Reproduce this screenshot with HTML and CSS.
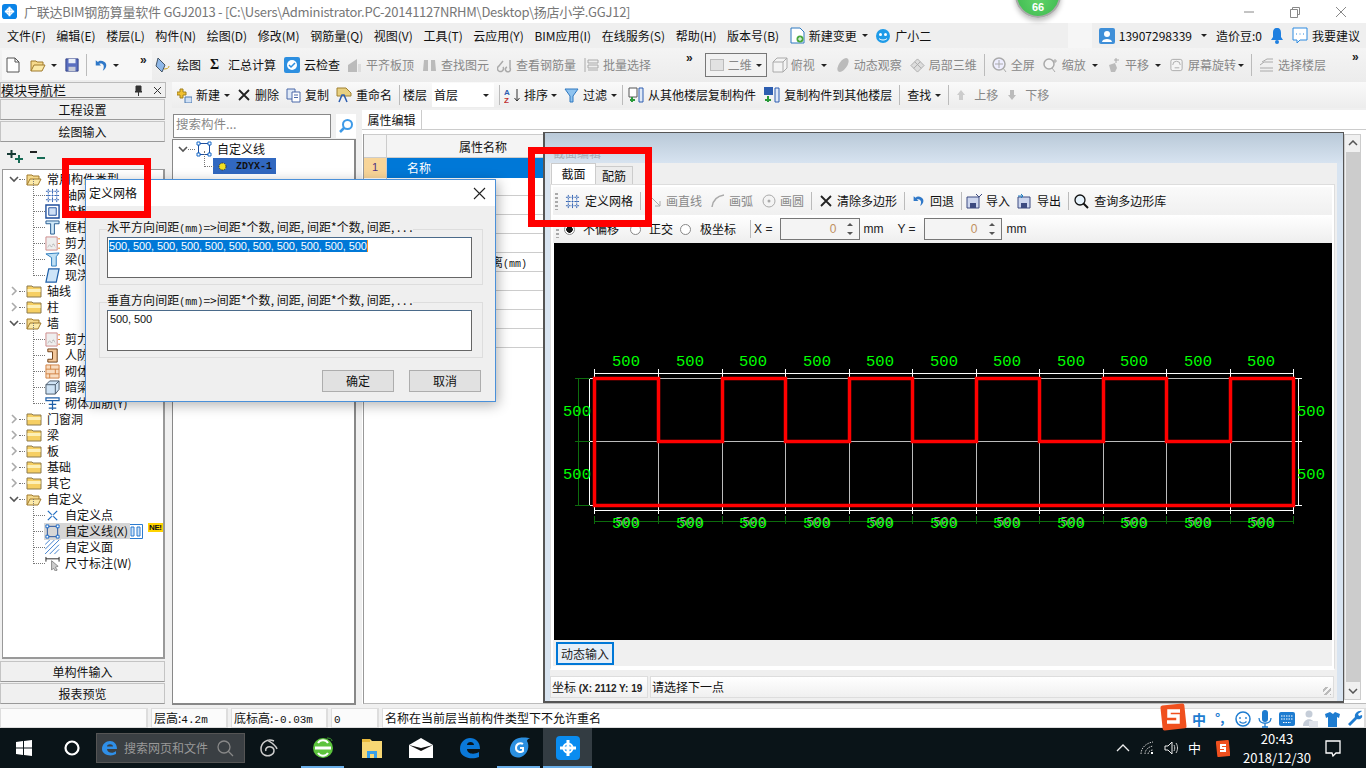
FILE: index.html
```html
<!DOCTYPE html>
<html lang="zh-CN">
<head>
<meta charset="utf-8">
<title>广联达BIM钢筋算量软件 GGJ2013</title>
<link rel="stylesheet" href="styles.css">
</head>
<body>
<svg class="defs" width="0" height="0">
  <defs>
    <symbol id="open" viewBox="0 0 16 16"><path d="M1 14V4h5l1 1h6v3" fill="#f5d98c" stroke="#a07a2c"/><path d="M1 14l3-6h11l-3 6z" fill="#fbe9a8" stroke="#a07a2c"/></symbol>
    <symbol id="closed" viewBox="0 0 16 16"><path d="M1 14V3h5l1 1h8v10z" fill="#f6cf63" stroke="#8d7b4d"/><path d="M1.500 6h13v3h-13z" fill="#fdf0b8"/></symbol>
    <symbol id="chev-d" viewBox="0 0 10 10"><path d="M1 3l4 4 4-4" fill="none" stroke="#555" stroke-width="1.600"/></symbol>
    <symbol id="chev-r" viewBox="0 0 10 10"><path d="M3 1l4 4-4 4" fill="none" stroke="#aaa" stroke-width="1.600"/></symbol>
    <symbol id="square" viewBox="0 0 16 16"><path d="M2.500 2.500h11v11h-11z" fill="none" stroke="#1f4e9c"/><path d="M1 1h3v3H1zM12 1h3v3h-3zM1 12h3v3H1zM12 12h3v3h-3z" fill="#fff" stroke="#1668c8"/></symbol>
    <symbol id="grid" viewBox="0 0 16 16"><path d="M1 3.500h14M1 8h14M1 12.500h14M3.500 1v14M8 1v14M12.500 1v14" fill="none" stroke="#2a5db0" stroke-dasharray="2 1"/></symbol>
    <symbol id="frame" viewBox="0 0 16 16"><path d="M1 1h14v14H1z" fill="#fff" stroke="#1f4e9c" stroke-width="1.500"/><path d="M4 4h8v8H4z" fill="#cfe0f5" stroke="#1f4e9c"/></symbol>
    <symbol id="column" viewBox="0 0 16 16"><path d="M1 1h14v3H10v11H6V4H1z" fill="#cfe8f7" stroke="#22598f"/></symbol>
    <symbol id="wall" viewBox="0 0 16 16"><path d="M1 1h12v14H1z" fill="#eee" stroke="#c88"/><path d="M3 12l2-3 2 3 2-4 2 4" fill="none" stroke="#999" stroke-dasharray="1 1"/><path d="M14 3h2M14 8h2M14 13h2" stroke="#e08020"/></symbol>
    <symbol id="beam" viewBox="0 0 16 16"><path d="M1 2l14-1-3 4v10H7V6z" fill="#bfe0f5" stroke="#2b7bbd"/></symbol>
    <symbol id="slab" viewBox="0 0 16 16"><path d="M4 1h11l-3 14H1z" fill="#cde4f8" stroke="#1f5fa8" stroke-width="1.300"/></symbol>
    <symbol id="doorwall" viewBox="0 0 16 16"><path d="M3 1h10v14H3v-3h5V4H3z" fill="#f3c79a" stroke="#6b3b12"/></symbol>
    <symbol id="brick" viewBox="0 0 16 16"><path d="M1 1h14v14H1z" fill="#f8dcc0" stroke="#d08040"/><path d="M1 5.500h14M1 10.500h14M6 1v4.500M11 5.500v5M5 10.500V15" stroke="#d08040"/></symbol>
    <symbol id="hiddenbeam" viewBox="0 0 16 16"><path d="M1 5l4-4h10v9l-4 5H1z" fill="#cfe3f5" stroke="#456"/><path d="M1 5h10v10M11 5l4-4" fill="none" stroke="#456"/></symbol>
    <symbol id="rebar" viewBox="0 0 16 16"><path d="M1 2h14v3H1zM8 5v10M4 9h8M4 13h8" fill="#fff" stroke="#1f5fa8" stroke-width="1.300"/></symbol>
    <symbol id="cross" viewBox="0 0 16 16"><path d="M3 3l10 10M13 3L3 13" stroke="#1f6cc0" stroke-width="1.300"/><rect x="7" y="7" width="2" height="2" fill="#fff"/></symbol>
    <symbol id="hatch" viewBox="0 0 16 16"><path d="M0 5l5-5M0 10l10-10M0 15L15 0M5 15L15 5M10 15l5-5" stroke="#3a7ccc"/></symbol>
    <symbol id="dim" viewBox="0 0 16 16"><path d="M1 1v5M15 1v5M1 3h14" stroke="#222"/><path d="M7 5l7 6-3 1 2 3-2 1-2-3-2 2z" fill="#ccc" stroke="#888"/></symbol>
    <symbol id="close-x" viewBox="0 0 14 14"><path d="M2 2l10 10M12 2L2 12" stroke="#222" stroke-width="1.800"/></symbol>
    <symbol id="save" viewBox="0 0 16 16"><path d="M1 1h14v14H1z" fill="#5a6fc0" stroke="#2c3a80"/><path d="M4 1h8v5H4z" fill="#e8eef8"/><path d="M4 10h8v5H4z" fill="#c7cbd8"/></symbol>
    <symbol id="undo" viewBox="0 0 16 16"><path d="M2 2v6h6L6 6c3-1 6 1 5 5l-1 3c5-3 5-8 2-10C9 2 6 2 4.500 4z" fill="#2f78c8"/></symbol>
  </defs>
</svg>

<div class="app">
  <header class="titlebar">
    <svg class="app-logo" viewBox="0 0 16 16" width="15" height="15"><rect width="16" height="16" rx="3" fill="#0a84e8"/><path d="M8 3v10M3 8h10" stroke="#fff" stroke-width="2.200"/><circle cx="8" cy="8" r="3" fill="none" stroke="#fff" stroke-width="1.300"/></svg>
    <span class="title-text">广联达BIM钢筋算量软件 GGJ2013 - [C:\Users\Administrator.PC-20141127NRHM\Desktop\扬店小学.GGJ12]</span>
    <div class="win-ctrl">
      <svg width="12" height="12" viewBox="0 0 12 12"><path d="M1 6h10" stroke="#888"/></svg>
      <svg width="12" height="12" viewBox="0 0 12 12"><path d="M1.500 3.500h7v8h-7zM3.500 3.500v-2h7v7h-2" fill="none" stroke="#888"/></svg>
      <svg width="12" height="12" viewBox="0 0 12 12"><path d="M1 1l10 10M11 1L1 11" stroke="#888"/></svg>
    </div>
  </header>

  <nav class="menubar">
    <span>文件(F)</span><span>编辑(E)</span><span>楼层(L)</span><span>构件(N)</span><span>绘图(D)</span><span>修改(M)</span><span>钢筋量(Q)</span><span>视图(V)</span><span>工具(T)</span><span>云应用(Y)</span><span>BIM应用(I)</span><span>在线服务(S)</span><span>帮助(H)</span><span>版本号(B)</span>
    <span class="menu-tool"><svg width="15" height="17" viewBox="0 0 15 17"><path d="M1 1h9l4 4v11H1z" fill="#fff" stroke="#2c78c0"/><circle cx="10" cy="12" r="3.500" fill="#4aa83c"/><path d="M10 10v4M8 12h4" stroke="#fff"/></svg>新建变更<i class="caret"></i></span>
    <span class="menu-tool"><svg width="16" height="16" viewBox="0 0 16 16"><circle cx="8" cy="8" r="7" fill="#1e9be8"/><circle cx="5.500" cy="6.500" r="1.500" fill="#fff"/><circle cx="10.500" cy="6.500" r="1.500" fill="#fff"/><path d="M4 10.500c2 2 6 2 8 0" fill="none" stroke="#fff"/></svg>广小二</span>
    <div class="account">
      <i class="white-box"></i>
      <span class="menu-tool"><svg width="16" height="16" viewBox="0 0 16 16"><rect width="16" height="16" rx="2" fill="#3f8fd8"/><circle cx="8" cy="6" r="3" fill="#fff"/><path d="M3 14c0-4 10-4 10 0z" fill="#fff"/></svg>13907298339<i class="caret caret-far"></i></span>
      <span>造价豆:0</span>
      <svg width="12" height="17" viewBox="0 0 12 17"><path d="M6 1c3 0 4 2 4 5v4l2 3H0l2-3V6c0-3 1-5 4-5z" fill="#1e7fe0"/><circle cx="6" cy="15" r="2" fill="#1e7fe0"/></svg>
      <span class="menu-tool"><svg width="16" height="17" viewBox="0 0 16 17"><path d="M1 1h14v12H8l-3 3v-3H1z" fill="#fff" stroke="#2c8ae0"/><path d="M4 7h1M7.500 7h1M11 7h1" stroke="#2c8ae0"/></svg>我要建议</span>
    </div>
  </nav>

  <div class="toolbar">
    <div class="tb-file">
      <svg width="14" height="16" viewBox="0 0 14 16"><path d="M1 1h8l4 4v10H1z" fill="#fff" stroke="#555"/><path d="M9 1v4h4" fill="none" stroke="#555"/></svg>
      <svg class="file-open" width="16" height="16"><use href="#open"/></svg><i class="caret"></i>
      <svg class="file-save" width="14" height="14"><use href="#save"/></svg>
      <i class="sep"></i>
      <svg width="14" height="15"><use href="#undo"/></svg><i class="caret"></i>
      <b class="more">»</b>
    </div>
    <div class="tool tool-draw"><svg width="16" height="16" viewBox="0 0 16 16"><path d="M4 1l7 7-3 7-6-6z" fill="#8fb8e8" stroke="#456"/><path d="M10 12c3 0 5-1 5-3" fill="none" stroke="#c7a020"/></svg>绘图</div>
    <div class="tool tool-sum"><b class="sigma">Σ</b>汇总计算</div>
    <div class="tool"><svg width="16" height="16" viewBox="0 0 16 16"><rect width="16" height="16" rx="2" fill="#2d8fe0"/><circle cx="8" cy="8" r="5" fill="#fff"/><path d="M5 8l2 2 4-4" fill="none" stroke="#2d8fe0" stroke-width="1.500"/></svg>云检查</div>
    <div class="tool off tool-flat"><svg width="15" height="16" viewBox="0 0 15 16"><path d="M1 15V8l9-6v13z" fill="#bbb"/><path d="M11 7h3v8h-3z" fill="#ddd"/></svg>平齐板顶</div>
    <div class="tool off"><svg width="15" height="15" viewBox="0 0 15 15"><path d="M2 2h4v11H1zM9 2h4l1 11H9z" fill="#bbb"/></svg>查找图元</div>
    <div class="tool off"><svg width="15" height="15" viewBox="0 0 15 15"><path d="M6 3L2 8a3 3 0 1 0 4 1M13 2v8a2.500 2.500 0 1 1-3-1" fill="none" stroke="#aaa" stroke-width="1.500"/></svg>查看钢筋量</div>
    <div class="tool off"><svg width="15" height="16" viewBox="0 0 15 16"><path d="M1 1v14M4 3h10v3H4zM4 8h10v3H4zM4 13h10" fill="#eee" stroke="#aaa"/></svg>批量选择</div>
    <b class="more more-mid">»</b>
    <div class="combo-2d"><i class="combo-swatch"></i>二维<i class="caret"></i></div>
    <div class="tool off tool-view"><svg width="18" height="18" viewBox="0 0 18 18"><path d="M2 6l4-4h10v10l-4 4H2zM2 6h10v10M12 6l4-4" fill="#f4f4f4" stroke="#aaa"/></svg>俯视<i class="caret"></i></div>
    <div class="tool off"><svg width="15" height="16" viewBox="0 0 15 16"><ellipse cx="8" cy="8" rx="4" ry="8" transform="rotate(35 8 8)" fill="#bbb"/></svg>动态观察</div>
    <div class="tool off"><svg width="15" height="15" viewBox="0 0 16 16"><path d="M8 1l7 7-7 7-7-7z" fill="#ddd" stroke="#aaa"/><path d="M5 4l7 7M11 4l-7 7" stroke="#aaa"/></svg>局部三维</div>
    <i class="sep sep-tb"></i>
    <div class="tool off"><svg width="15" height="16" viewBox="0 0 15 16"><circle cx="7" cy="7" r="6" fill="#eef" stroke="#aaa" stroke-width="1.500"/><path d="M7 3v8M3 7h8M11 11l3 4" stroke="#aaa"/></svg>全屏</div>
    <div class="tool off"><svg width="15" height="16" viewBox="0 0 15 16"><circle cx="6" cy="7" r="5" fill="#f4f4f4" stroke="#aaa" stroke-width="1.500"/><path d="M9 11l3 4M12 2v4M10 4h4" stroke="#aaa"/></svg>缩放<i class="caret"></i></div>
    <div class="tool off"><svg width="15" height="16" viewBox="0 0 15 16"><path d="M3 8l6-2 2 5-2 4H5z" fill="#bbb"/><path d="M10 1v5M8 3h5" stroke="#aaa"/></svg>平移<i class="caret"></i></div>
    <div class="tool off tool-rot"><svg width="15" height="16" viewBox="0 0 16 16"><rect x="2" y="2" width="12" height="12" rx="2" fill="#f4f4f4" stroke="#aaa"/><path d="M4 8a4 4 0 0 1 8 0M6 11h5" fill="none" stroke="#aaa"/></svg>屏幕旋转<i class="caret"></i></div>
    <i class="sep sep-tb"></i>
    <div class="tool off"><svg width="15" height="15" viewBox="0 0 15 15"><path d="M1 7l4-3h9M1 10h13M1 13h13M3 4l5-3h6" fill="none" stroke="#aaa"/></svg>选择楼层</div>
    <b class="more more-end">»</b>
  </div>

  <div class="workspace">
    <aside class="nav">
      <div class="nav-head"><span>模块导航栏</span><div class="nav-head-icons"><svg width="9" height="11" viewBox="0 0 9 11"><path d="M2 1h5v5l1 1H1l1-1zM4.500 7v4" fill="#333" stroke="#333"/></svg><svg width="9" height="9" viewBox="0 0 9 9"><path d="M1 1l7 7M8 1L1 8" stroke="#333"/></svg></div></div>
      <button class="nav-btn">工程设置</button>
      <button class="nav-btn">绘图输入</button>
      <div class="nav-tools">
        <svg width="18" height="14" viewBox="0 0 18 14"><path d="M1 5h9" stroke="#173b35" stroke-width="2"/><path d="M5.500 1v8" stroke="#173b35" stroke-width="2"/><path d="M9 10h8M13 6v8" stroke="#176b55" stroke-width="2"/></svg>
        <svg width="18" height="14" viewBox="0 0 18 14"><path d="M1 3h7" stroke="#222" stroke-width="2"/><path d="M8 9h8" stroke="#176b55" stroke-width="2"/></svg>
      </div>
      <ul class="tree">
        <li class="node"><svg width="10" height="10"><use href="#chev-d"/></svg><i class="dots"></i><svg width="16" height="16"><use href="#open"/></svg><span>常用构件类型</span></li>
        <li class="leaf"><svg width="15" height="15"><use href="#grid"/></svg><span>轴网(J)</span></li>
        <li class="leaf"><svg width="15" height="15"><use href="#frame"/></svg><span>筏板基础(M)</span></li>
        <li class="leaf"><svg width="15" height="15"><use href="#column"/></svg><span>框柱(Z)</span></li>
        <li class="leaf"><svg width="15" height="15"><use href="#wall"/></svg><span>剪力墙(Q)</span></li>
        <li class="leaf"><svg width="15" height="15"><use href="#beam"/></svg><span>梁(L)</span></li>
        <li class="leaf"><svg width="15" height="15"><use href="#slab"/></svg><span>现浇板(B)</span></li>
        <li class="node"><svg width="10" height="10"><use href="#chev-r"/></svg><i class="dots"></i><svg width="16" height="16"><use href="#closed"/></svg><span>轴线</span></li>
        <li class="node"><svg width="10" height="10"><use href="#chev-r"/></svg><i class="dots"></i><svg width="16" height="16"><use href="#closed"/></svg><span>柱</span></li>
        <li class="node"><svg width="10" height="10"><use href="#chev-d"/></svg><i class="dots"></i><svg width="16" height="16"><use href="#open"/></svg><span>墙</span></li>
        <li class="leaf"><svg width="15" height="15"><use href="#wall"/></svg><span>剪力墙(Q)</span></li>
        <li class="leaf"><svg width="15" height="15"><use href="#doorwall"/></svg><span>人防门框墙(RF)</span></li>
        <li class="leaf"><svg width="15" height="15"><use href="#brick"/></svg><span>砌体墙(Q)</span></li>
        <li class="leaf"><svg width="15" height="15"><use href="#hiddenbeam"/></svg><span>暗梁(A)</span></li>
        <li class="leaf"><svg width="15" height="15"><use href="#rebar"/></svg><span>砌体加筋(Y)</span></li>
        <li class="node"><svg width="10" height="10"><use href="#chev-r"/></svg><i class="dots"></i><svg width="16" height="16"><use href="#closed"/></svg><span>门窗洞</span></li>
        <li class="node"><svg width="10" height="10"><use href="#chev-r"/></svg><i class="dots"></i><svg width="16" height="16"><use href="#closed"/></svg><span>梁</span></li>
        <li class="node"><svg width="10" height="10"><use href="#chev-r"/></svg><i class="dots"></i><svg width="16" height="16"><use href="#closed"/></svg><span>板</span></li>
        <li class="node"><svg width="10" height="10"><use href="#chev-r"/></svg><i class="dots"></i><svg width="16" height="16"><use href="#closed"/></svg><span>基础</span></li>
        <li class="node"><svg width="10" height="10"><use href="#chev-r"/></svg><i class="dots"></i><svg width="16" height="16"><use href="#closed"/></svg><span>其它</span></li>
        <li class="node"><svg width="10" height="10"><use href="#chev-d"/></svg><i class="dots"></i><svg width="16" height="16"><use href="#open"/></svg><span>自定义</span></li>
        <li class="leaf"><svg width="15" height="15"><use href="#cross"/></svg><span>自定义点</span></li>
        <li class="leaf is-current"><svg width="15" height="15"><use href="#square"/></svg><span class="cur-label">自定义线(X)</span><svg class="tag-icon" width="15" height="15" viewBox="0 0 15 15"><path d="M.5.500h14v14H.5z" fill="#fff" stroke="#2b7bd0"/><path d="M3 3h3v9H3zM9 3h3v9H9z" fill="#cfe3f8" stroke="#2b7bd0"/></svg><b class="new-tag">NE!</b></li>
        <li class="leaf"><svg width="15" height="15"><use href="#hatch"/></svg><span>自定义面</span></li>
        <li class="leaf"><svg width="15" height="15"><use href="#dim"/></svg><span>尺寸标注(W)</span></li>
      </ul>
      <button class="nav-btn nav-btn-low">单构件输入</button>
      <button class="nav-btn">报表预览</button>
    </aside>

    <div class="main">
      <div class="toolbar2">
        <div class="tool"><svg width="15" height="15" viewBox="0 0 15 15"><path d="M3 1h3v3h3v3H6v3H3V7H0V4h3z" fill="#f0c030" stroke="#a08020"/><path d="M8 9h7v6H8z" fill="#cfe0f5" stroke="#4a78b0"/></svg>新建<i class="caret"></i></div>
        <div class="tool"><svg width="14" height="14"><use href="#close-x"/></svg>删除</div>
        <div class="tool"><svg width="15" height="15" viewBox="0 0 15 15"><path d="M1 1h8v10H1z" fill="#dfe9f7" stroke="#4a68a8"/><path d="M6 4h8v10H6z" fill="#fff" stroke="#4a68a8"/><path d="M8 7h4M8 9.500h4" stroke="#4a68a8"/></svg>复制</div>
        <div class="tool"><svg width="16" height="16" viewBox="0 0 16 16"><path d="M1 1h9l5 5v3H1z" fill="#e8d080" stroke="#a08030"/><path d="M3 15l3-7h2l3 7" fill="none" stroke="#2c5db0" stroke-width="1.500"/></svg>重命名</div>
        <i class="sep sep-t2"></i>
        <span class="floor-label">楼层</span>
        <div class="floor-combo">首层<i class="caret"></i></div>
        <i class="sep sep-t2 sep-sort"></i>
        <div class="tool tool-tight"><svg width="17" height="17" viewBox="0 0 17 17"><text x="0" y="8" class="az-a">A</text><text x="0" y="16" class="az-z">Z</text><path d="M13 2v12M10.500 11l2.500 3 2.500-3" fill="none" stroke="#333"/></svg>排序<i class="caret"></i></div>
        <div class="tool"><svg width="15" height="15" viewBox="0 0 15 15"><path d="M1 1h13L9 8v6H6V8z" fill="#8fc3ef" stroke="#2f78c0"/></svg>过滤<i class="caret"></i></div>
        <i class="sep sep-t2 sep-copy"></i>
        <div class="tool tool-copy"><svg width="16" height="16" viewBox="0 0 16 16"><path d="M1 1h8v9H1z" fill="#fff" stroke="#555"/><path d="M11 1h4v14h-4z" fill="#dfe9f7" stroke="#2c5db0"/><path d="M4 10v5M2 13h5" stroke="#2a9a3a" stroke-width="2"/></svg>从其他楼层复制构件</div>
        <div class="tool"><svg width="17" height="16" viewBox="0 0 17 16"><path d="M1 0h9v8H1z" fill="#2c5db0"/><path d="M12 1h4v14h-4z" fill="#dfe9f7" stroke="#2c5db0"/><path d="M5 9v6M2 13h6" stroke="#2a9a3a" stroke-width="2"/></svg>复制构件到其他楼层</div>
        <i class="sep sep-t2"></i>
        <div class="tool">查找<i class="caret"></i></div>
        <i class="sep sep-t2"></i>
        <div class="tool off tool-up"><svg width="10" height="12" viewBox="0 0 10 12"><path d="M5 1l4 5H7v5H3V6H1z" fill="#ccc"/></svg>上移</div>
        <div class="tool off tool-up"><svg width="10" height="12" viewBox="0 0 10 12"><path d="M5 11l4-5H7V1H3v5H1z" fill="#bbb"/></svg>下移</div>
      </div>
      <div class="main-body">
        <section class="list-pane">
          <div class="search-row">
            <div class="search-input">搜索构件...</div>
            <div class="search-btn"><svg width="16" height="16" viewBox="0 0 16 16"><circle cx="9.500" cy="6.500" r="4.500" fill="none" stroke="#3d9ae8" stroke-width="2"/><path d="M6 10l-4 4" stroke="#3d9ae8" stroke-width="2.500"/></svg></div>
          </div>
          <div class="list-box">
            <div class="list-root"><svg width="10" height="10"><use href="#chev-d"/></svg><i class="dots"></i><svg width="16" height="16"><use href="#square"/></svg><span>自定义线</span></div>
            <div class="list-sub"><span class="list-sel"><svg width="11" height="11" viewBox="0 0 11 11"><circle cx="5.500" cy="5.500" r="3.500" fill="#f2e020" stroke="#333" stroke-dasharray="1.500 1"/></svg>ZDYX-1</span></div>
          </div>
        </section>
        <section class="prop-pane">
          <div class="prop-tabs"><span class="prop-tab">属性编辑</span></div>
          <div class="prop-box">
            <div class="prop-table">
              <div class="prop-row prop-head"><span class="num"></span><span class="name">属性名称</span><span></span></div>
              <div class="prop-row prop-sel"><span class="num">1</span><span class="name">名称</span><span></span></div>
              <div class="prop-row"><span class="num">2</span><span class="name"></span><span></span></div>
              <div class="prop-row"><span class="num">3</span><span class="name"></span><span></span></div>
              <div class="prop-row"><span class="num">4</span><span class="name"></span><span></span></div>
              <div class="prop-row"><span class="num">5</span><span class="name"></span><span></span></div>
              <div class="prop-row"><span class="num">6</span><span class="name">纵筋起点至边距离<tt class="mm">(mm)</tt></span><span></span></div>
              <div class="prop-row"><span class="num">7</span><span class="name"></span><span></span></div>
              <div class="prop-row"><span class="num">8</span><span class="name"></span><span></span></div>
              <div class="prop-row"><span class="num">9</span><span class="name"></span><span></span></div>
              <div class="prop-row"><span class="num">10</span><span class="name"></span><span></span></div>
            </div>
            <div class="scrollbar"><svg width="10" height="7" viewBox="0 0 10 7"><path d="M1 5l4-4 4 4" fill="none" stroke="#555" stroke-width="1.500"/></svg><i class="thumb"></i><svg width="10" height="7" viewBox="0 0 10 7"><path d="M1 2l4 4 4-4" fill="none" stroke="#555" stroke-width="1.500"/></svg></div>
          </div>
        </section>
      </div>
    </div>
  </div>

  <footer class="status">
    <span class="st st-0"></span>
    <span class="st st-1">层高:<tt>4.2m</tt></span>
    <span class="st st-2">底标高:<tt>-0.03m</tt></span>
    <span class="st st-3"><tt>0</tt></span>
    <span class="st st-4">名称在当前层当前构件类型下不允许重名</span>
  </footer>

  <div class="taskbar">
    <svg class="tk-win" width="16" height="16" viewBox="0 0 16 16"><path d="M0 2l7-1v6.500H0zM8 1l8-1v7.500H8zM0 8.500h7V15l-7-1zM8 8.500h8V16l-8-1z" fill="#fff"/></svg>
    <svg class="tk-ring" width="16" height="16" viewBox="0 0 16 16"><circle cx="8" cy="8" r="6.500" fill="none" stroke="#fff" stroke-width="2.200"/></svg>
    <div class="tk-search">
      <svg width="18" height="18" viewBox="0 0 18 18"><path d="M1 10c0-5 4-8 8-8s7 3 7 8H6c0 4 6 5 9 2v3c-5 3-14 1-14-5zM6 7.500h6c0-3-6-3-6 0z" fill="#2f8fe8"/></svg>
      <span>搜索网页和文件</span>
      <svg class="tk-mag" width="17" height="17" viewBox="0 0 17 17"><circle cx="7" cy="7" r="6" fill="none" stroke="#888" stroke-width="1.300"/><path d="M11 11l5 5" stroke="#888" stroke-width="1.300"/></svg>
    </div>
    <div class="tk-apps">
      <div class="tk-app tk-swirl"><svg width="20" height="20" viewBox="0 0 20 20"><path d="M15 3C8 0 2 5 2 11s6 8 10 6 4-7 0-8-6 2-5 4M8 2c3 2 8 4 10 9" fill="none" stroke="#ccc" stroke-width="1.500"/></svg></div>
      <div class="tk-app tk-on tk-ie"><svg width="22" height="24" viewBox="0 0 22 24"><circle cx="11" cy="12" r="10" fill="#5cc33c"/><path d="M3 12h16" stroke="#fff" stroke-width="3"/><path d="M6 7a6 6 0 0 1 10 0M6 17a6 6 0 0 0 10 0" fill="none" stroke="#fff" stroke-width="2"/><path d="M15 2c3 0 5 1 5 3" fill="none" stroke="#3a9a2c"/></svg></div>
      <div class="tk-app"><svg width="22" height="22" viewBox="0 0 22 22"><path d="M1 2h8l2 2h10v17H1z" fill="#f7d774"/><path d="M1 2h8v3H1z" fill="#e8b93c"/><path d="M6 21v-7h10v7h-3v-4H9v4z" fill="#3aa0e8"/></svg></div>
      <div class="tk-app"><svg width="24" height="20" viewBox="0 0 24 20"><path d="M0 7l12-7 12 7v13H0z" fill="#fff"/><path d="M0 7l12 6 12-6-12 3z" fill="#111"/></svg></div>
      <div class="tk-app"><svg width="22" height="22" viewBox="0 0 22 22"><path d="M1 12C1 5 6 1 11 1c6 0 10 4 10 11H8c0 5 7 6 12 3v5c-7 3-19 1-19-8zM8 8h7c0-4-7-4-7 0z" fill="#0a78d8"/></svg></div>
      <div class="tk-app tk-on"><svg width="24" height="24" viewBox="0 0 24 24"><path d="M12 2c5-1 9 0 11 0-2 1-3 2-3 3 3 5 1 13-6 16-6 2-12-2-11-9C4 7 7 3 12 2z" fill="#2b8fe0"/><path d="M16 8c-3-2-7 0-7 4s5 5 7 3v-3h-3" fill="none" stroke="#fff" stroke-width="2"/></svg></div>
      <div class="tk-app tk-active"><svg width="24" height="24" viewBox="0 0 24 24"><rect width="24" height="24" rx="4" fill="#0a8cf0"/><path d="M12 4v16M4 12h16" stroke="#fff" stroke-width="3"/><circle cx="12" cy="12" r="4.500" fill="none" stroke="#fff" stroke-width="2"/></svg></div>
    </div>
    <div class="tray">
      <svg width="14" height="8" viewBox="0 0 14 8"><path d="M1 7l6-6 6 6" fill="none" stroke="#eee" stroke-width="1.300"/></svg>
      <svg width="14" height="14" viewBox="0 0 14 14"><path d="M1 13C1 7 6 2 13 1M5 13c0-4 3-7 8-8M8 13c0-2 2-4 5-4" fill="none" stroke="#ccc" stroke-dasharray="1.500 1"/><rect x="11" y="11" width="2" height="2" fill="#fff"/></svg>
      <svg width="15" height="14" viewBox="0 0 15 14"><path d="M1 5h3l4-4v12L4 9H1z" fill="none" stroke="#eee"/><path d="M10 4c1 2 1 4 0 6M12 2c2 3 2 7 0 10" fill="none" stroke="#ccc"/></svg>
      <span class="tray-ime">中</span>
      <svg width="14" height="17" viewBox="0 0 14 17"><rect width="13" height="16" x="0.500" y="0.500" rx="1" fill="#f0501e" transform="rotate(-6 7 8)"/><path d="M10 5H5v3h4v3H4" fill="none" stroke="#fff" stroke-width="2"/></svg>
      <div class="clock"><span>20:43</span><span>2018/12/30</span></div>
      <svg class="tray-note" width="16" height="17" viewBox="0 0 16 17"><path d="M1 1h14v12h-4l-3 3-1-3H1z" fill="none" stroke="#fff" stroke-width="1.300"/></svg>
    </div>
  </div>

  <!-- Overlays -->
  <div class="ball"><span>66</span></div>

  <div class="sogou">
    <svg class="sg-s" width="27" height="28" viewBox="0 0 27 28"><rect x="1.500" y="1.500" width="24" height="25" rx="2" fill="#f0501e" transform="rotate(-6 13 14)"/><path d="M20 8h-11v5h9v6H7" fill="none" stroke="#fff" stroke-width="3.500"/></svg>
    <b class="sg-zh">中</b><b class="sg-p">°,</b>
    <svg width="16" height="16" viewBox="0 0 16 16"><circle cx="8" cy="8" r="7" fill="none" stroke="#1e7cd0" stroke-width="1.500"/><path d="M5 6v2M11 6v2M4.500 10.500c2 2 5 2 7 0" fill="none" stroke="#1e7cd0" stroke-width="1.300"/></svg>
    <svg width="14" height="18" viewBox="0 0 14 18"><rect x="4" y="0" width="6" height="12" rx="3" fill="#1e7cd0"/><path d="M1 8c0 7 12 7 12 0M7 14v3M4 17h6" fill="none" stroke="#1e7cd0" stroke-width="1.300"/></svg>
    <svg width="16" height="14" viewBox="0 0 16 14"><rect width="16" height="14" rx="2" fill="#1e7cd0"/><path d="M2 4h12M2 7h12M4 10.500h8" stroke="#fff" stroke-dasharray="1.500 1"/></svg>
    <svg width="16" height="18" viewBox="0 0 16 18"><circle cx="7" cy="4" r="3.500" fill="#c5cdd8"/><path d="M1 16c0-9 12-9 12 0z" fill="#c5cdd8"/><rect x="7" y="11" width="9" height="6" fill="#dfe3ea"/></svg>
    <svg width="15" height="16" viewBox="0 0 15 16"><path d="M5 1L0 3l1 4 2-1v10h9V6l2 1 1-4-5-2-2 2z" fill="#1e7cd0"/></svg>
    <svg width="16" height="17" viewBox="0 0 16 17"><path d="M15 1l-4 3 1 2 3-1c1 3-2 5-5 4l-7 7-2-2 7-7c-1-3 3-7 7-6z" fill="#1e7cd0"/></svg>
  </div>

  <div class="section-win">
    <div class="sw-title"><span>截面编辑</span></div>
    <div class="sw-body">
      <div class="sw-tabs"><span class="sw-tab sw-tab-on">截面</span><span class="sw-tab">配筋</span></div>
      <div class="sw-panel">
        <div class="sw-tools">
          <i class="grip"></i>
          <div class="tool tool-t3"><svg width="15" height="15"><use href="#grid"/></svg>定义网格</div>
          <i class="sep sep-t3"></i>
          <div class="tool tool-t3 t3-line off"><svg width="14" height="14" viewBox="0 0 14 14"><path d="M1 1l11 11M12 7v5H7" fill="none" stroke="#aaa"/></svg>画直线</div>
          <div class="tool tool-t3 t3-shape off"><svg width="14" height="14" viewBox="0 0 14 14"><path d="M1 13C2 6 6 2 13 1" fill="none" stroke="#aaa" stroke-width="1.500"/></svg>画弧</div>
          <div class="tool tool-t3 t3-shape off"><svg width="14" height="14" viewBox="0 0 14 14"><circle cx="7" cy="7" r="6" fill="#f4f4f4" stroke="#aaa"/><circle cx="7" cy="7" r="1.500" fill="#aaa"/></svg>画圆</div>
          <i class="sep sep-t3"></i>
          <div class="tool tool-t3 t3-clear"><svg width="14" height="14"><use href="#close-x"/></svg>清除多边形</div>
          <i class="sep sep-t3"></i>
          <div class="tool tool-t3"><svg width="13" height="14"><use href="#undo"/></svg>回退</div>
          <i class="sep sep-t3"></i>
          <div class="tool tool-t3 tool-import"><svg width="16" height="16" viewBox="0 0 16 16"><path d="M1 4h12v11H1z" fill="#cdd6ee" stroke="#3c4a80"/><path d="M4 10h6v5H4z" fill="#3c4a80"/><path d="M10 1l3 3 3-3" fill="none" stroke="#3c4a80"/></svg>导入</div>
          <div class="tool tool-t3 tool-export"><svg width="16" height="16" viewBox="0 0 16 16"><path d="M1 4h12v11H1z" fill="#cdd6ee" stroke="#3c4a80"/><path d="M4 10h6v5H4z" fill="#3c4a80"/><path d="M1 3h5M4 1l2 2-2 2" fill="none" stroke="#1f7cc0"/></svg>导出</div>
          <i class="sep sep-t3"></i>
          <div class="tool tool-t3 tool-query"><svg width="15" height="15" viewBox="0 0 15 15"><circle cx="6" cy="6" r="5" fill="#e6f2fb" stroke="#111" stroke-width="1.300"/><path d="M9.500 9.500L14 14" stroke="#111" stroke-width="2"/></svg>查询多边形库</div>
        </div>
        <div class="sw-coords">
          <i class="grip"></i>
          <label class="opt"><i class="radio radio-on"></i>不偏移</label>
          <label class="opt"><i class="radio"></i>正交</label>
          <label class="opt"><i class="radio"></i>极坐标</label>
          <i class="sep sep-t3 sep-coords"></i>
          <span class="lat">X =</span>
          <div class="spin"><span>0</span><i class="spin-arrows"></i></div>
          <span class="lat">mm</span>
          <span class="lat lat-y">Y =</span>
          <div class="spin spin-y"><span>0</span><i class="spin-arrows"></i></div>
          <span class="lat">mm</span>
        </div>
        <svg class="canvas" viewBox="554 243 778 397" width="778" height="397">
          <rect x="554" y="243" width="778" height="397" fill="#000"/>
          <g class="cv-grid">
            <path d="M594 378H1293M594 441H1293M594 505H1293"/>
            <path d="M658 378V505M722 378V505M785 378V505M849 378V505M912 378V505M976 378V505M1039 378V505M1103 378V505M1166 378V505M1230 378V505M1293 378V505M594 378V505"/>
          </g>
          <g class="cv-dim">
            <path d="M594 373H1293M594 510H1293M589 378V505M1298 378V505"/>
            <path d="M594 369V377M658 369V377M722 369V377M785 369V377M849 369V377M912 369V377M976 369V377M1039 369V377M1103 369V377M1166 369V377M1230 369V377M1293 369V377"/>
            <path d="M594 506V514M658 506V514M722 506V514M785 506V514M849 506V514M912 506V514M976 506V514M1039 506V514M1103 506V514M1166 506V514M1230 506V514M1293 506V514"/>
            <path d="M585 378H593M585 441H593M585 505H593M1294 378H1302M1294 441H1302M1294 505H1302"/>
          </g>
          <g class="cv-green">
            <path d="M578 378V505M575 378H590M575 441H590M575 505H590M594 521H1293"/>
            <path d="M594 516V524M658 516V524M722 516V524M785 516V524M849 516V524M912 516V524M976 516V524M1039 516V524M1103 516V524M1166 516V524M1230 516V524M1293 516V524"/>
          </g>
          <path class="cv-red" d="M594 378H658V441H722V378H785V441H849V378H912V441H976V378H1039V441H1103V378H1166V441H1230V378H1293V505H594Z"/>
          <g class="cv-text cv-grey">
            <text x="627" y="526">500</text><text x="691" y="526">500</text><text x="754" y="526">500</text><text x="818" y="526">500</text><text x="881" y="526">500</text><text x="945" y="526">500</text><text x="1008" y="526">500</text><text x="1072" y="526">500</text><text x="1135" y="526">500</text><text x="1199" y="526">500</text><text x="1262" y="526">500</text>
          </g>
          <g class="cv-text">
            <text x="626" y="366">500</text><text x="690" y="366">500</text><text x="753" y="366">500</text><text x="817" y="366">500</text><text x="880" y="366">500</text><text x="944" y="366">500</text><text x="1007" y="366">500</text><text x="1071" y="366">500</text><text x="1134" y="366">500</text><text x="1198" y="366">500</text><text x="1261" y="366">500</text>
            <text x="626" y="528">500</text><text x="690" y="528">500</text><text x="753" y="528">500</text><text x="817" y="528">500</text><text x="880" y="528">500</text><text x="944" y="528">500</text><text x="1007" y="528">500</text><text x="1071" y="528">500</text><text x="1134" y="528">500</text><text x="1198" y="528">500</text><text x="1261" y="528">500</text>
            <text x="577" y="416">500</text><text x="577" y="479">500</text>
            <text x="1311" y="416">500</text><text x="1311" y="479">500</text>
          </g>
        </svg>
        <div class="sw-dyn"><button class="dyn-btn">动态输入</button></div>
      </div>
      <div class="sw-status">
        <span class="sws sws-1">坐标 <b>(X: 2112 Y: 19</b></span>
        <span class="sws sws-2">请选择下一点<i class="size-grip"></i></span>
      </div>
    </div>
  </div>

  <div class="dialog">
    <div class="dlg-title"><span>定义网格</span><svg width="13" height="13" viewBox="0 0 13 13"><path d="M1 1l11 11M12 1L1 12" stroke="#222" stroke-width="1.100"/></svg></div>
    <div class="dlg-body">
      <fieldset class="dlg-group">
        <legend>水平方向间距<tt class="mm">(mm)</tt>=&gt;间距*个数, 间距, 间距*个数, 间距, . . .</legend>
        <div class="dlg-input"><span class="dlg-selected">500, 500, 500, 500, 500, 500, 500, 500, 500, 500, 500</span></div>
      </fieldset>
      <fieldset class="dlg-group">
        <legend>垂直方向间距<tt class="mm">(mm)</tt>=&gt;间距*个数, 间距, 间距*个数, 间距, . . .</legend>
        <div class="dlg-input dlg-input-2"><span>500, 500</span></div>
      </fieldset>
      <div class="dlg-actions"><button class="dlg-btn">确定</button><button class="dlg-btn">取消</button></div>
    </div>
  </div>

  <i class="red-box red-a"></i>
  <i class="red-box red-b"></i>
</div>
</body>
</html>
```

FILE: styles.css
```css
* { box-sizing: border-box; }
html, body { margin: 0; padding: 0; }
body { width: 1366px; height: 768px; overflow: hidden; background: #f0f0f0; font: 12px/16px "Noto Sans CJK SC", "Liberation Sans", sans-serif; color: #111; }
.defs { position: absolute; }
i { display: block; font-style: normal; }
ul { list-style: none; margin: 0; padding: 0; }
button { font: inherit; color: inherit; }
tt { font: 11px "Liberation Mono", monospace; }
tt.mm { font-size: 10px; }
svg { flex: none; display: block; }

.app { position: relative; width: 1366px; height: 768px; display: flex; flex-direction: column; overflow: hidden; }

/* title */
.titlebar { height: 23px; background: #fff; display: flex; align-items: center; padding-left: 2px; flex: none; }
.app-logo { margin-right: 7px; }
.title-text { color: #777; font-size: 13px; letter-spacing: -.26px; white-space: nowrap; }
.win-ctrl { margin-left: auto; display: flex; gap: 34px; padding-right: 19px; }

/* menu */
.menubar { height: 25px; flex: none; display: flex; align-items: center; gap: 10.600px; padding-left: 7px; background: #efefef; white-space: nowrap; }
.menu-tool { display: flex; align-items: center; gap: 4px; }
.caret { width: 0; height: 0; flex: none; border: 3px solid transparent; border-top: 3px solid #222; border-bottom: 0; margin-left: 4px; }
.menubar > .menu-tool .caret { margin-left: 1px; margin-right: -3px; }
.account { margin-left: auto; display: flex; align-items: center; gap: 9px; padding-right: 6px; }
.account .white-box { width: 24px; height: 25px; background: #f6f6f6; margin-right: -2px; }
.account .caret-far { margin-left: 5px; }

/* toolbars */
.toolbar { height: 34px; flex: none; display: flex; align-items: center; gap: 8px; padding-left: 2px; background: linear-gradient(#f4f4f4, #ececec); white-space: nowrap; }
.tb-file { width: 150px; height: 30px; margin-right: -6px; display: flex; align-items: center; padding-left: 4px; background: #f7f7f7; position: relative; }
.file-open { margin-left: 10px; }
.tb-file .caret { margin-left: 5px; }
.file-save { margin-left: 8px; }
.sep { width: 1px; height: 22px; background: #bbb; flex: none; }
.tb-file .sep { margin: 0 7px; }
.more { font: bold 12px "Liberation Sans", sans-serif; color: #222; align-self: flex-start; margin-top: 3px; }
.tb-file .more { position: absolute; left: 138px; top: 0; }
.more-mid { margin-left: 27px; margin-right: 4px; }
.more-end { position: absolute; left: 1352px; top: 50px; margin: 0; }
.tool { display: flex; align-items: center; gap: 4px; white-space: nowrap; }
.tool.off { color: #888; }
.tool-draw { gap: 7px; }
.tool-sum { margin-left: 1px; gap: 8px; }
.sigma { font: bold 14px "Liberation Serif", serif; width: 10px; }
.tool-flat { margin-left: -1px; }
.combo-2d { width: 62px; height: 24px; display: flex; align-items: center; border: 1px solid #777; background: #f2f2f2; color: #888; padding: 0 4px; gap: 4px; margin-right: -4px; }
.combo-2d .caret { margin-left: auto; }
.combo-swatch { width: 14px; height: 12px; background: #e2e2e2; border: 1px solid #bbb; }
.tool-view { gap: 2px; }
.toolbar .tool .caret { margin-left: 2px; }
.toolbar .tool-view .caret { margin-left: 4px; }
.toolbar .tool-rot .caret { margin-left: -2px; }
.sep-tb { margin: 0 -1px; }

.workspace { flex: 1; min-height: 0; display: flex; gap: 6px; }

/* nav */
.nav { width: 166px; flex: none; display: flex; flex-direction: column; }
.nav-head { height: 16px; display: flex; align-items: center; justify-content: space-between; padding: 0 3px 0 0; border: 1px solid #bbb; border-bottom-color: #888; font-size: 13px; overflow: hidden; }
.nav-head-icons { display: flex; gap: 10px; align-items: center; }
.nav-btn { height: 21px; margin-top: 1px; width: 165px; border: 1px solid #c4c4c4; border-bottom-color: #999; background: #f0f0f0; padding: 0; }
.nav-tools { height: 27px; display: flex; gap: 5px; padding: 7px 0 0 6px; width: 165px; }
.tree { width: 163px; margin: 0 0 1px 2px; height: 490px; background: #fff; border: 1px solid #999; border-width: 1px 2px 2px 1px; padding-top: 1px; overflow: hidden; }
.nav-btn-low { height: 21px; }
.node { height: 16px; display: flex; align-items: center; padding-left: 6px; white-space: nowrap; }
.dots { width: 6px; margin-right: 1px; border-bottom: 1px dotted #777; }
.node svg:last-of-type { margin-right: 5px; }
.leaf { height: 16px; position: relative; display: flex; align-items: center; padding-left: 42px; gap: 5px; white-space: nowrap; }
.leaf::before { content: ""; position: absolute; left: 30px; top: -8px; height: 16px; width: 11px; border-left: 1px dotted #777; border-bottom: 1px dotted #777; }
.is-current > svg:first-child, .is-current .cur-label { position: relative; }
.cur-label { background: #d6d6d6; padding-left: 5px; margin-left: -5px; height: 16px; margin-right: -7px; padding-right: 2px; font-size: 12px; }
.is-current > svg:first-child { background: #d6d6d6; outline: 1px solid #d6d6d6; z-index: 1; }
.tag-icon { margin-left: 0; }
.new-tag { position: absolute; left: 145px; top: 0; height: 9px; font: bold 8px/9px "Liberation Sans", sans-serif; background: #ffd400; color: #111; letter-spacing: -.4px; padding: 0 1px; width: 15px; overflow: hidden; }

/* main */
.main { flex: 1; min-width: 0; display: flex; flex-direction: column; }
.toolbar2 { height: 26px; flex: none; display: flex; align-items: center; gap: 7px; padding-left: 5px; background: linear-gradient(#fafafa, #ededed); white-space: nowrap; }
.toolbar2 .caret { margin-left: 0; }
.sep-t2 { height: 20px; }
.floor-label { margin: 0 -2px 0 -4px; }
.floor-combo { width: 62px; height: 24px; background: #fff; display: flex; align-items: center; padding-left: 2px; margin-right: 0; }
.floor-combo .caret { margin-left: auto; margin-right: 5px; }
.sep-sort { margin-left: -2px; }
.tool-tight { gap: 3px; margin-left: -3px; }
.sep-copy { margin-left: -2px; }
.tool-copy { margin-left: -2px; }
.az-a { font: bold 8px "Liberation Sans", sans-serif; fill: #2c5db0; }
.az-z { font: bold 8px "Liberation Sans", sans-serif; fill: #c03030; }
.tool-up { gap: 8px; }
.tool-up + .tool-up { margin-left: 2px; }

.main-body { flex: 1; min-height: 0; display: flex; gap: 6px; padding-top: 2px; }
.list-pane { width: 184px; flex: none; display: flex; flex-direction: column; height: 595px; }
.search-row { height: 29px; display: flex; padding-top: 4px; background: #f0f0f0; }
.search-input { width: 158px; height: 24px; margin-left: 1px; border: 1px solid #888; background: #fff; color: #888; padding: 1px 2px; font-size: 12.500px; }
.search-btn { width: 20px; height: 24px; margin-left: 5px; background: #fff; display: flex; align-items: center; justify-content: center; }
.list-box { flex: 1; background: #fff; border: 1px solid #888; border-width: 1px 2px 2px 1px; padding-top: 0; }
.list-root { height: 18px; display: flex; align-items: center; padding-left: 5px; }
.list-root svg:last-of-type { margin-right: 5px; }
.list-root .dots { width: 7px; }
.list-sub { height: 16px; padding-left: 40px; position: relative; }
.list-sub::before { content: ""; position: absolute; left: 31px; top: -7px; height: 15px; width: 9px; border-left: 1px dotted #777; border-bottom: 1px dotted #777; }
.list-sel { display: flex; align-items: center; gap: 8px; width: 63px; height: 16px; background: #3168c0; color: #111; padding-left: 4px; font: bold 10px "Liberation Mono", monospace; }

.prop-pane { flex: 1; min-width: 0; display: flex; flex-direction: column; height: 594px; background: #fff; margin-left: 0; border-left: 0; }
.prop-tabs { height: 20px; flex: none; background: #fff; border-bottom: 1px solid #ccc; display: flex; }
.prop-tab { width: 60px; text-align: center; border-right: 1px solid #ccc; background: #fff; line-height: 19px; }
.prop-box { flex: 1; display: flex; margin: 4px 0 0 1px; padding-bottom: 3px; background: #fff; border-left: 1px solid #999; border-bottom: 1px solid #bbb; }
.prop-table { flex: 1; min-width: 0; }
.prop-row { display: grid; grid-template-columns: 22px 193px 1fr; height: 19px; border-bottom: 1px solid #ccc; line-height: 18px; }
.prop-sel .name { line-height: 20px; }
.prop-head { height: 24px; line-height: 23px; background: #f4f4f4; border-top: 1px solid #ccc; }
.prop-head .name { text-align: center; padding: 0; }
.name { padding-left: 20px; border-left: 1px solid #ccc; white-space: nowrap; }
.num { text-align: center; color: #503080; font: 11px/18px "Liberation Sans", sans-serif; }
.prop-sel .num { background: #f8d598; }
.prop-sel .name { background: #0078d7; color: #fff; }
.scrollbar { width: 17px; flex: none; display: flex; flex-direction: column; align-items: center; justify-content: space-between; border: 1px solid #ccc; padding: 5px 0; margin-right: 5px; background: #f0f0f0; }
.thumb { flex: 1; width: 14px; background: #ccc; margin: 5px 0; }

/* status */
.status { height: 20px; flex: none; display: flex; gap: 3px; background: #f0f0f0; line-height: 18px; white-space: nowrap; }
.st { border: 1px solid #ddd; border-width: 1px 2px 1px 1px; padding-left: 2px; background: #fbfbfb; }
.st-0 { width: 148px; }
.st-1 { width: 77px; }
.st-2 { width: 97px; }
.st-3 { width: 48px; }
.st-4 { flex: 1; background: #fff; }

/* taskbar */
.taskbar { height: 40px; flex: none; position: relative; display: flex; align-items: center; background: #0a1418; color: #fff; }
.tk-win { margin-left: 16px; }
.tk-ring { margin-left: 32px; }
.tk-search { width: 149px; height: 30px; margin-left: 16px; background: #3a3f43; border: 1px solid #555; display: flex; align-items: center; padding-left: 4px; gap: 5px; color: #999; }
.tk-mag { margin-left: 4px; }
.tk-apps { display: flex; margin-left: 1px; }
.tk-app { width: 49px; height: 40px; display: flex; align-items: center; justify-content: center; position: relative; }
.tk-swirl { width: 46px; }
.tk-ie { margin-left: 6px; }
.tk-on::after { content: ""; position: absolute; left: 3px; right: 3px; bottom: 0; height: 2px; background: #6aaee8; }
.tk-active { background: #333c42; }
.tk-active::after { content: ""; position: absolute; left: 0; right: 0; bottom: 0; height: 2px; background: #6aaee8; }
.tray { margin-left: auto; display: flex; align-items: center; gap: 10px; padding-right: 25px; }
.tray-ime { font-size: 13px; margin: 0 5px 0 -1px; }
.clock { width: 84px; margin-left: -5px; display: flex; flex-direction: column; align-items: center; line-height: 19px; font-size: 13px; }
.tray-note { margin-left: -4px; }

/* overlays */
.ball { position: absolute; left: 1015px; top: -28px; width: 46px; height: 46px; border-radius: 50%; background: radial-gradient(circle at 50% 60%, #5fd368, #36b34a); border: 2px solid #aaa; box-shadow: 0 3px 5px rgba(0,0,0,.25); display: flex; align-items: flex-end; justify-content: center; z-index: 3; color: #fff; font: bold 11px/15px "Liberation Sans", sans-serif; padding-bottom: 1px; }

.sogou { position: absolute; left: 1160px; top: 703px; width: 206px; height: 27px; display: flex; align-items: center; gap: 7px; z-index: 5; }
.sg-s { margin-right: 1px; margin-top: 1px; }
.sg-zh { color: #1e7cd0; font-size: 14px; margin: 4px 0 0 -3px; }
.sg-p { color: #1e7cd0; font-size: 13px; width: 13px; margin-top: 3px; margin-left: 2px; }
.sogou svg:not(.sg-s) { margin-top: 4px; }

.section-win { position: absolute; left: 543px; top: 132px; width: 801px; height: 571px; z-index: 2; border: 1px solid #555; border-width: 1px 1px 2px 2px; background: #d8e4f1; display: flex; flex-direction: column; }
.sw-title { height: 30px; flex: none; background: linear-gradient(#b9c9d8, #d7e3f0); padding: 12px 0 0 8px; color: #a5adb6; }
.sw-body { flex: 1; margin: 0 6px 0 5px; display: flex; flex-direction: column; min-height: 0; background: #efefef; }
.sw-tabs { height: 21px; flex: none; display: flex; align-items: flex-end; padding-left: 1px; }
.sw-tab { width: 38px; height: 18px; border: 1px solid #ccc; border-bottom: 0; text-align: center; background: #ececec; line-height: 18px; }
.sw-tab-on { width: 45px; height: 21px; background: #fff; line-height: 19px; margin-right: -1px; position: relative; }
.sw-panel { flex: none; height: 486px; display: flex; flex-direction: column; border: 1px solid #ddd; background: #fff; border-bottom: 2px solid #fff; margin-right: 2px; padding: 2px; }
.sw-tools { height: 28px; flex: none; display: flex; align-items: center; gap: 7px; padding-left: 2px; background: linear-gradient(#fafafa, #f0f0f0); white-space: nowrap; }
.grip { width: 3px; height: 17px; flex: none; background: repeating-linear-gradient(#aaa 0 2px, transparent 2px 4px); }
.tool-t3 { gap: 5px; }
.t3-line, .t3-clear { gap: 4px; }
.t3-shape { gap: 4px; margin-left: 2px; }
.tool-import { margin-left: -3px; gap: 4px; }
.tool-export { gap: 4px; }
.tool-query { margin-left: -2px; }
.sep-t3 { height: 18px; }
.sw-coords { height: 28px; flex: none; display: flex; align-items: center; gap: 5px; padding-left: 3px; background: linear-gradient(#fff, #eee); white-space: nowrap; }
.opt { display: flex; align-items: center; gap: 8px; margin-right: 6px; }
.opt + .opt + .opt { margin-left: -4px; gap: 9px; margin-right: 0; }
.radio { width: 11px; height: 11px; border: 1px solid #888; border-radius: 50%; background: #fff; }
.radio-on { background: radial-gradient(circle, #111 0 3px, #fff 3.500px); }
.sep-coords { margin: 0 -2px 0 9px; }
.lat { font: 12px "Liberation Sans", sans-serif; color: #222; margin-right: 3px; }
.lat-y { margin-left: 6px; }
.spin { width: 80px; height: 22px; border: 1px solid #777; background: #f4f4f4; display: flex; align-items: center; justify-content: flex-end; padding-right: 6px; gap: 11px; color: #c09060; font: 12px "Liberation Sans", sans-serif; margin-right: -2px; }
.spin-y { width: 78px; margin-right: 0; }
.spin-arrows { width: 6px; height: 14px; border-left: 3px solid transparent; border-right: 3px solid transparent; position: relative; }
.spin-arrows::before, .spin-arrows::after { content: ""; position: absolute; left: -3px; border: 3px solid transparent; }
.spin-arrows::before { top: -2px; border-bottom-color: #555; }
.spin-arrows::after { bottom: -2px; border-top-color: #555; }
.canvas { margin-left: 1px; flex: none; }
.cv-grid path { stroke: #bcbcbc; fill: none; stroke-width: 1; shape-rendering: crispEdges; }
.cv-dim path { stroke: #fff; fill: none; stroke-width: 1; shape-rendering: crispEdges; }
.cv-green path { stroke: #0d6c0d; fill: none; stroke-width: 1; shape-rendering: crispEdges; }
.cv-red { fill: none; stroke: #f00; stroke-width: 3.500; stroke-linejoin: miter; transform: translate(.5px, .5px); }
.cv-text text { font: 15.500px "Liberation Mono", monospace; fill: #0f0; text-anchor: middle; }
.cv-grey text { fill: #999; font-size: 13px; }
.sw-dyn { flex: 1; background: #f0f0f0; padding: 2px 0 0 3px; }
.dyn-btn { width: 58px; height: 23px; border: 2px solid #0078d7; background: #e6eff8; color: #222; padding: 0; line-height: 17px; }
.sw-status { flex: none; height: 22px; margin-top: 6px; display: flex; gap: 2px; }
.sws { border: 1px solid #ddd; background: linear-gradient(#fff, #f0f0f0); line-height: 20px; padding-left: 1px; white-space: nowrap; overflow: hidden; }
.sws b { font: bold 10px "Liberation Sans", sans-serif; color: #222; }
.sws-1 { width: 98px; }
.sws-2 { flex: 1; position: relative; margin-right: 3px; }
.size-grip { position: absolute; right: 2px; bottom: 2px; width: 8px; height: 8px; background: repeating-linear-gradient(135deg, transparent 0 2px, #bbb 2px 4px); }

.dialog { position: absolute; left: 85px; top: 179px; width: 411px; height: 223px; z-index: 4; background: #efefef; border: 1px solid #4a90d9; box-shadow: 2px 3px 12px rgba(0,0,0,.3); display: flex; flex-direction: column; }
.dlg-title { height: 26px; flex: none; background: #fff; display: flex; align-items: center; justify-content: space-between; padding: 0 9px 0 3px; }
.dlg-body { flex: 1; padding: 0 13px; position: relative; }
.dlg-group { margin: 14px 0 0; height: 65px; padding: 0 9px 0 7px; border: 1px solid #ddd; width: 384px; }
.dlg-group + .dlg-group { margin-top: 8px; }
.dlg-group legend { padding: 0 0 3px; margin: 0; font-size: 12px; line-height: 13px; white-space: nowrap; letter-spacing: .04px; }
.dlg-input { width: 365px; height: 41px; margin-top: -1px; background: #fff; border: 1px solid #666; border-top-color: #4a6a8a; padding: 2px 1px; font: 11px/12px "Liberation Sans", sans-serif; white-space: nowrap; letter-spacing: -.1px; }
.dlg-input-2 { padding: 2px; }
.dlg-selected { display: inline-block; background: #0078d7; color: #fff; border-right: 1px solid #ff9020; }
.dlg-actions { display: flex; justify-content: flex-end; gap: 15px; margin: 12px 1px 0 0; }
.dlg-btn { width: 72px; height: 22px; background: #e1e1e1; border: 1px solid #adadad; padding: 0; }

.red-box { position: absolute; border: 7px solid #f00; z-index: 6; pointer-events: none; }
.red-a { left: 62px; top: 158px; width: 89px; height: 60px; }
.red-b { left: 528px; top: 147px; width: 124px; height: 80px; }
```
